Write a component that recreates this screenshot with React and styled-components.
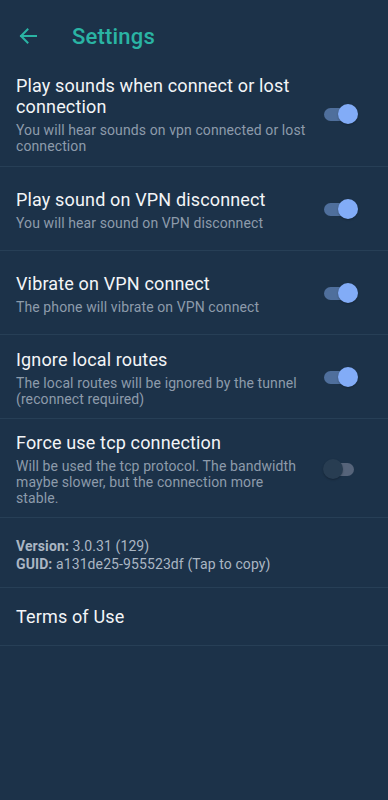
import styled, { createGlobalStyle } from "styled-components";

const GlobalStyle = createGlobalStyle`
  html, body {
    margin: 0;
    padding: 0;
    background: #1c3249;
  }
  body {
    font-family: Roboto, "Noto Sans", sans-serif;
    -webkit-font-smoothing: antialiased;
  }
`;

const settings = [
  {
    title: "Play sounds when connect or lost connection",
    desc: "You will hear sounds on vpn connected or lost connection",
    on: true,
  },
  {
    title: "Play sound on VPN disconnect",
    desc: "You will hear sound on VPN disconnect",
    on: true,
  },
  {
    title: "Vibrate on VPN connect",
    desc: "The phone will vibrate on VPN connect",
    on: true,
  },
  {
    title: "Ignore local routes",
    desc: "The local routes will be ignored by the tunnel (reconnect required)",
    on: true,
  },
  {
    title: "Force use tcp connection",
    desc: "Will be used the tcp protocol. The bandwidth maybe slower, but the connection more stable.",
    on: false,
  },
];

function App() {
  return (
    <Page>
      <GlobalStyle />
      <Toolbar>
        <BackButton aria-label="Back">
          <svg width="18" height="16" viewBox="0 0 18 16" fill="none">
            <path
              d="M17 8H2M8.5 1.5L2 8l6.5 6.5"
              stroke="#2ab4a4"
              strokeWidth="2"
              strokeLinecap="square"
            />
          </svg>
        </BackButton>
        <Title>Settings</Title>
      </Toolbar>

      {settings.map((s, i) => (
        <Row key={i} first={i === 0}>
          <TextCol>
            <RowTitle>{s.title}</RowTitle>
            <RowDesc>{s.desc}</RowDesc>
          </TextCol>
          <Switch on={s.on}>
            <Thumb on={s.on} />
          </Switch>
        </Row>
      ))}

      <InfoBlock>
        <InfoLine>
          <b>Version:</b> 3.0.31 (129)
        </InfoLine>
        <InfoLine>
          <b>GUID:</b> a131de25-955523df (Tap to copy)
        </InfoLine>
      </InfoBlock>

      <LinkRow>Terms of Use</LinkRow>
    </Page>
  );
}

const Page = styled.div`
  width: 388px;
  min-height: 800px;
  background: #1c3249;
  color: #f1f3f5;
`;

const Toolbar = styled.div`
  display: flex;
  align-items: center;
  height: 56px;
  padding-top: 8px;
`;

const BackButton = styled.div`
  width: 56px;
  display: flex;
  align-items: center;
  padding-left: 19px;
  box-sizing: border-box;
`;

const Title = styled.h1`
  margin: 0 0 0 16px;
  font-size: 22px;
  font-weight: 500;
  color: #2ab4a4;
  letter-spacing: 0.2px;
`;

const Row = styled.div`
  display: flex;
  align-items: center;
  min-height: 84px;
  box-sizing: border-box;
  padding: ${(p) => (p.first ? "11px 30px 12px 16px" : "13px 30px 11px 16px")};
  border-top: ${(p) => (p.first ? "none" : "1px solid #273f56")};
`;

const TextCol = styled.div`
  flex: 1;
  min-width: 0;
  padding-right: 18px;
`;

const RowTitle = styled.div`
  font-size: 18px;
  line-height: 21px;
  letter-spacing: 0.15px;
  color: #f3f5f7;
`;

const RowDesc = styled.div`
  margin-top: 5px;
  font-size: 14px;
  line-height: 16px;
  letter-spacing: 0.1px;
  color: #8d9bab;
`;

const Switch = styled.div`
  position: relative;
  flex: none;
  width: 30px;
  height: 13px;
  margin-right: 4px;
  border-radius: 7px;
  background: ${(p) => (p.on ? "#4f6f9c" : "#56647a")};
`;

const Thumb = styled.div`
  position: absolute;
  top: -4px;
  left: ${(p) => (p.on ? "14px" : "-1px")};
  width: 20px;
  height: 20px;
  border-radius: 50%;
  background: ${(p) => (p.on ? "#82acf7" : "#283d52")};
  box-shadow: 0 1px 2px rgba(0, 0, 0, 0.25);
`;

const InfoBlock = styled.div`
  border-top: 1px solid #273f56;
  padding: 19px 16px 14px;
  min-height: 70px;
  box-sizing: border-box;
`;

const InfoLine = styled.div`
  font-size: 14px;
  line-height: 18px;
  letter-spacing: 0.1px;
  color: #aab6c3;

  b {
    font-weight: 700;
  }
`;

const LinkRow = styled.div`
  display: flex;
  align-items: center;
  height: 57px;
  padding: 0 16px;
  font-size: 18px;
  letter-spacing: 0.15px;
  color: #f3f5f7;
  border-top: 1px solid #273f56;
  border-bottom: 1px solid #273f56;
`;

export default App;
